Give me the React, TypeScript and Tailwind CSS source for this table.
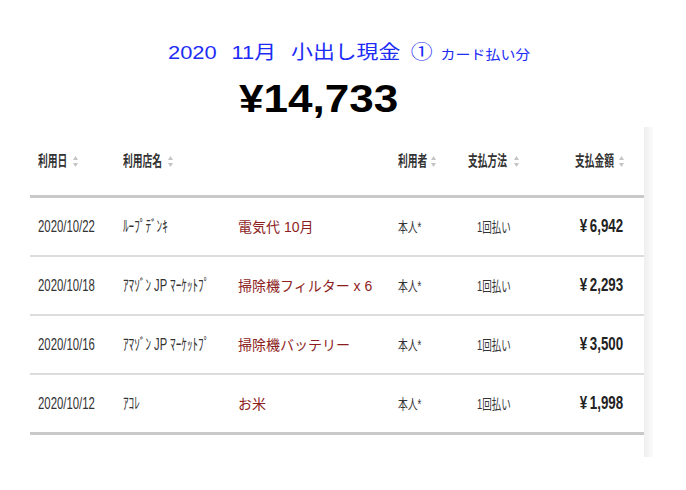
import React from "react";

const SortIcon = () => (
  <svg width="5" height="11" viewBox="0 0 5 11" className="shrink-0">
    <polygon points="2.5,0 5,4 0,4" fill="#c4c4c4" />
    <polygon points="0,7 5,7 2.5,11" fill="#c4c4c4" />
  </svg>
);

const rows = [
  { date: "2020/10/22", shop: "ﾙｰﾌﾟﾃﾞﾝｷ", memo: "電気代 10月", user: "本人*", method: "1回払い", amount: "6,942" },
  { date: "2020/10/18", shop: "ｱﾏｿﾞﾝ JP ﾏｰｹｯﾄﾌﾟ", memo: "掃除機フィルター x 6", user: "本人*", method: "1回払い", amount: "2,293" },
  { date: "2020/10/16", shop: "ｱﾏｿﾞﾝ JP ﾏｰｹｯﾄﾌﾟ", memo: "掃除機バッテリー", user: "本人*", method: "1回払い", amount: "3,500" },
  { date: "2020/10/12", shop: "ｱｺﾚ", memo: "お米", user: "本人*", method: "1回払い", amount: "1,998" },
];

const font = { fontFamily: '"Liberation Sans", "Noto Sans CJK JP", sans-serif' };

function Head({ label, w }: { label: string; w: string }) {
  return (
    <div className="flex items-center gap-[6px]">
      <span className={`inline-block ${w} whitespace-nowrap`}>
        <span className="inline-block origin-left scale-x-[0.65] text-[15px] font-bold leading-[20px] text-[#333]">
          {label}
        </span>
      </span>
      <SortIcon />
    </div>
  );
}

export default function App() {
  return (
    <div className="w-[686px] h-[490px] bg-white overflow-hidden" style={font}>
      <div className="pt-[41px]">
        <div className="pl-[168px] h-[24px]">
          <div className="flex items-baseline origin-left scale-x-[1.15] whitespace-nowrap text-[#1c2cf6] leading-[24px]">
            <span className="text-[19px]">2020</span>
            <span className="text-[19px] ml-[13px]">11月</span>
            <span className="text-[19px] ml-[13px]">小出し現金</span>
            <span className="text-[19px] ml-[9px]">①</span>
            <span className="text-[13px] ml-[7px]">カード払い分</span>
          </div>
        </div>
        <div className="pl-[239px] mt-[14px] h-[40px]">
          <div className="origin-left scale-x-[1.13] text-[39px] font-bold leading-[40px] text-black whitespace-nowrap">
            ¥14,733
          </div>
        </div>
      </div>

      <div className="flex ml-[30px] mt-[8px] h-[330px]">
        <div className="w-[614px] flex flex-col">
          <div className="grid grid-cols-[86px_115px_160px_56px_93px_104px] h-[68px] items-center">
            <div className="pl-[8px]"><Head label="利用日" w="w-[29px]" /></div>
            <div className="pl-[7px]"><Head label="利用店名" w="w-[39px]" /></div>
            <div />
            <div className="pl-[7px]"><Head label="利用者" w="w-[27px]" /></div>
            <div className="pl-[21px]"><Head label="支払方法" w="w-[40px]" /></div>
            <div className="pl-[35px]"><Head label="支払金額" w="w-[38px]" /></div>
          </div>
          <div className="h-[3px] bg-[#c9c9c9]" />
          {rows.map((r, i) => (
            <div key={i} className="flex flex-col">
              <div className="grid grid-cols-[86px_115px_160px_56px_93px_104px] h-[57px] items-center whitespace-nowrap">
                <div className="pl-[8px]">
                  <span className="inline-block origin-left scale-x-[0.71] text-[16px] text-[#333]">{r.date}</span>
                </div>
                <div className="pl-[7px]">
                  <span className="inline-block origin-left scale-x-[0.7] text-[16px] text-[#333]">{r.shop}</span>
                </div>
                <div className="pl-[7px]">
                  <span className="text-[14px] text-[#8d1e1e]">{r.memo}</span>
                </div>
                <div className="pl-[7px]">
                  <span className="inline-block origin-left scale-x-[0.7] text-[14px] text-[#333]">{r.user}</span>
                </div>
                <div className="pl-[30px]">
                  <span className="inline-block origin-left scale-x-[0.68] text-[14px] text-[#333]">{r.method}</span>
                </div>
                <div className="pr-[21px] text-right">
                  <span className="inline-block origin-right scale-x-[0.7] text-[19px] font-bold text-[#222]">
                    ¥<span className="ml-[4px]">{r.amount}</span>
                  </span>
                </div>
              </div>
              {i < rows.length - 1 ? (
                <div className="h-[2px] bg-[#dcdcdc]" />
              ) : (
                <div className="h-[3px] bg-[#c9c9c9]" />
              )}
            </div>
          ))}
        </div>
        <div className="w-[9px] bg-gradient-to-r from-[#efefef] to-[#fafafa]" />
      </div>
    </div>
  );
}
